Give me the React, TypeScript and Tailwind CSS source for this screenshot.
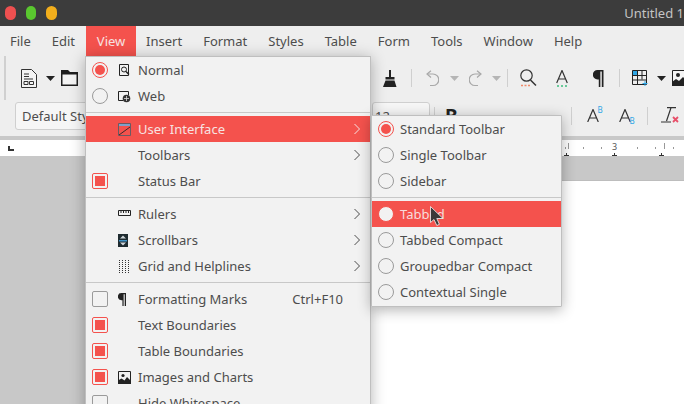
import React from "react";

const Dropdown = ({ dark = false }: { dark?: boolean }) => (
  <svg width="9" height="5" viewBox="0 0 9 5" className="shrink-0">
    <path d="M0 0h9L4.5 5z" fill={dark ? "#222" : "#b5b5b5"} />
  </svg>
);

const Sep = ({ className }: { className: string }) => (
  <div className={`h-[18px] w-px shrink-0 bg-[#cfcfcf] ${className}`} />
);

const Chevron = () => (
  <svg width="8" height="12" viewBox="0 0 8 12" className="absolute right-[9px]">
    <path d="M1.5 1l5 5-5 5" fill="none" stroke="currentColor" strokeWidth="1" />
  </svg>
);

const Radio = ({ on, hot }: { on?: boolean; hot?: boolean }) => (
  <div
    className={`flex h-4 w-4 shrink-0 items-center justify-center rounded-full border ${
      on ? "border-[#f4524d]" : hot ? "border-[#f4524d] bg-[#f2f2f2]" : "border-[#9a9a9a]"
    }`}
  >
    {on && <div className="h-[10px] w-[10px] rounded-full bg-[#f4524d]" />}
  </div>
);

const Check = ({ on }: { on?: boolean }) => (
  <div
    className={`flex h-4 w-4 shrink-0 items-center justify-center rounded-[2px] border ${
      on ? "border-[#f4524d]" : "border-[#9a9a9a]"
    }`}
  >
    {on && <div className="h-[10px] w-[10px] bg-[#f4524d]" />}
  </div>
);

const MenuSep = () => (
  <div className="flex h-[7px] items-start pt-[3px]">
    <div className="h-px w-full bg-[#c8c8c8]" />
  </div>
);

const Row = ({
  mark,
  icon,
  label,
  sub,
  hot,
  right,
}: {
  mark?: React.ReactNode;
  icon?: React.ReactNode;
  label: string;
  sub?: boolean;
  hot?: boolean;
  right?: string;
}) => (
  <div
    className={`relative flex h-[26px] items-center pl-[6px] ${
      hot ? "bg-[#f4524d] text-[#f7e3e2]" : "text-[#4d4d4d]"
    }`}
  >
    <div className="w-4 shrink-0">{mark}</div>
    <div className="ml-[10px] flex w-[20px] shrink-0 items-center">{icon}</div>
    <span>{label}</span>
    {right && <span className="absolute right-[27px]">{right}</span>}
    {sub && <Chevron />}
  </div>
);

const SubRow = ({ label, on, hot }: { label: string; on?: boolean; hot?: boolean }) => (
  <div
    className={`flex h-[26px] items-center gap-[6px] pl-[6px] ${
      hot ? "bg-[#f4524d] text-[#f7dcdb]" : "text-[#4d4d4d]"
    }`}
  >
    <Radio on={on} hot={hot} />
    <span>{label}</span>
  </div>
);

const IconNormal = () => (
  <svg width="13" height="14" viewBox="0 0 13 14" fill="none" stroke="#222">
    <path d="M1.5 1.5h9v11h-9z" />
    <circle cx="6" cy="6.5" r="2.5" />
    <path d="M8 8.5l3 3" strokeWidth="1.5" />
  </svg>
);

const IconWeb = () => (
  <svg width="13" height="13" viewBox="0 0 13 13" fill="none" stroke="#222">
    <path d="M5 10.5H.5v-9h10V5" />
    <circle cx="8.5" cy="8.5" r="3.8" fill="#333" stroke="none" />
    <path d="M6 8.5h5M8.5 6v5" stroke="#ddd" strokeWidth=".8" />
  </svg>
);

const IconUi = () => (
  <svg width="13" height="13" viewBox="0 0 13 13" fill="none">
    <path d="M.5 .5h12v12H.5z" stroke="#6b5a62" />
    <path d="M1 1h11v2H1z" fill="#7fa0c8" />
    <path d="M1 12L12 4" stroke="#3b2a2a" />
  </svg>
);

const IconRulers = () => (
  <svg width="13" height="8" viewBox="0 0 13 8" fill="none" stroke="#222">
    <path d="M.5 .5h12v5H.5z" />
    <path d="M3 1v2M5.5 1v2M8 1v2M10.5 1v2" />
  </svg>
);

const IconScroll = () => (
  <svg width="10" height="13" viewBox="0 0 10 13">
    <path d="M0 0h10v13H0z" fill="#1f2b30" />
    <path d="M5 1.5l3 3H2zM5 11.5l3-3H2z" fill="#cfd6da" />
    <path d="M1 6h8v1.5H1z" fill="#3f93c8" />
  </svg>
);

const IconGrid = () => (
  <svg width="13" height="13" viewBox="0 0 13 13" stroke="#333" strokeDasharray="1 1">
    <path d="M1.5 0v13M4.5 0v13M7.5 0v13M10.5 0v13" />
  </svg>
);

const IconPilcrow = ({ size = 13 }: { size?: number }) => (
  <svg width={size * 0.62} height={size} viewBox="0 0 8 13" fill="#222">
    <path d="M3.5 0H8v13H6.7V1.2H5.6V13H4.4V7.2h-1A3.6 3.6 0 0 1 3.5 0z" />
  </svg>
);

const IconImage = () => (
  <svg width="13" height="13" viewBox="0 0 13 13" fill="none">
    <path d="M.5 .5h12v12H.5z" stroke="#222" />
    <circle cx="5" cy="4.5" r="1.6" fill="#222" />
    <path d="M0 13V9.5l3.5-2 3 2 2.5-3.5 4 4V13z" fill="#222" />
  </svg>
);

const NewDoc = () => (
  <svg width="16" height="19" viewBox="0 0 16 19" fill="none" stroke="#333">
    <path d="M.5 .5h10l5 5v13H.5z" fill="#f4f4f4" />
    <path d="M3 5h5M3 7.5h5M3 10h9" />
    <path d="M3 12.5h4v3H3zM8.5 12.5h4v3h-4z" />
  </svg>
);

const Folder = () => (
  <svg width="17" height="16" viewBox="0 0 17 16">
    <path d="M0 0h7l2 2h8v14H0z" fill="#1f1f1f" />
    <path d="M1.5 4.5h14V14.500h-14z" fill="#f4f4f4" />
  </svg>
);

const Broom = () => (
  <svg width="14" height="17" viewBox="0 0 14 17" fill="#222">
    <path d="M6 0h2v7H6zM2.500 7h9v2.500h-9z" />
    <path d="M2.500 10.500h9L13.500 17H0z" />
  </svg>
);

const Undo = ({ flip }: { flip?: boolean }) => (
  <svg
    width="13"
    height="17"
    viewBox="0 0 13 17"
    fill="none"
    stroke="#a8a8a8"
    strokeWidth="1.200"
    className={flip ? "-scale-x-100" : ""}
  >
    <path d="M5 .7L1 4l4 3.500" />
    <path d="M1.500 4H7a5.500 5.500 0 0 1 0 11.500H4" />
  </svg>
);

const Find = () => (
  <svg width="17" height="18" viewBox="0 0 17 18" fill="none">
    <circle cx="6.500" cy="6.500" r="5.700" stroke="#333" strokeWidth="1.200" />
    <path d="M10.500 11l5.500 5.500" stroke="#333" strokeWidth="1.500" />
    <path d="M1 16.500h2M4.500 16.500h2M8 16.500h2" stroke="#f08a6a" strokeWidth="1.500" />
  </svg>
);

const LetterA = ({ dots }: { dots?: boolean }) => (
  <svg width="12" height="17" viewBox="0 0 12 17" fill="none">
    <path d="M.7 13L6 .5 11.300 13M2.500 9h7" stroke="#333" strokeWidth="1.200" />
    {dots && <path d="M1 16h2M5 16h2M9 16h2" stroke="#3fbf7f" strokeWidth="1.500" />}
  </svg>
);

const TableIcon = () => (
  <svg width="17" height="16" viewBox="0 0 17 16" fill="none">
    <path d="M.5 .5h5v5h-5z" fill="#2ea6e6" />
    <path d="M.5 .5h14v14H.5zM.5 5.500h14M.5 10h14M5.500 .5v14M10 .5v9" stroke="#222" />
    <path d="M13 11v5M10.500 13.500h5" stroke="#2ea6e6" />
  </svg>
);

const PicIcon = () => (
  <svg width="16" height="16" viewBox="0 0 16 16" fill="none" className="shrink-0">
    <path d="M.5 .5h15v15H.5z" stroke="#222" fill="#f4f4f4" />
    <circle cx="6" cy="5" r="2" fill="#222" />
    <path d="M0 16v-4l4-3 3 2 4-4 5 5v4z" fill="#222" />
  </svg>
);

const ScriptA = ({ mark, top }: { mark: string; top?: boolean }) => (
  <div className="relative h-[18px] w-[16px] shrink-0">
    <svg width="12" height="13" viewBox="0 0 12 13" fill="none" className="absolute left-0 top-[3px]">
      <path d="M.7 13L6 .5 11.300 13M2.500 9h7" stroke="#333" strokeWidth="1.200" />
    </svg>
    <span
      className={`absolute right-0 text-[8px] leading-[8px] text-[#2ea6e6] ${top ? "top-0" : "bottom-[-1px]"}`}
    >
      {mark}
    </span>
  </div>
);

const ClearFmt = () => (
  <svg width="18" height="16" viewBox="0 0 18 16" fill="none">
    <path d="M6 .7h9M10 .7L5.500 14M0 15h10" stroke="#333" strokeWidth="1.200" />
    <path d="M12 10l5 5M17 10l-5 5" stroke="#e8506a" strokeWidth="1.800" />
  </svg>
);

const Cursor = () => (
  <svg width="15" height="21" viewBox="0 0 15 21">
    <path d="M.5.500v16l3.500-3 2.800 6 2.600-1.200-2.600-5.800H13z" fill="#3a3a3a" stroke="#f2f2f2" strokeWidth=".8" />
  </svg>
);

const Ruler = () => {
  const ticks = [565, 583, 601, 637, 655, 673];
  return (
    <div className="relative mt-1 h-4 w-full bg-white">
      {ticks.map((x) => (
        <div key={x} className="absolute top-[7px] h-[2px] w-px bg-[#999]" style={{ left: x }} />
      ))}
      {[568, 664].map((x) => (
        <div key={x} className="absolute top-[3px] h-[6px] w-px bg-[#999]" style={{ left: x }} />
      ))}
      <span className="absolute left-[612px] top-[1px] text-[9px] leading-3 text-[#555]">3</span>
      {[564, 612, 659].map((x) => (
        <div key={x} className="absolute bottom-0 left-0 h-[3px] w-[5px]" style={{ left: x }}>
          <div className="mx-auto h-[3px] w-px bg-[#333]" />
          <div className="absolute bottom-0 h-px w-[5px] bg-[#333]" />
        </div>
      ))}
    </div>
  );
};

const App = () => {
  return (
    <div className="relative flex h-[404px] w-[684px] flex-col overflow-hidden bg-[#c8c8c8] font-['Noto_Sans',sans-serif] text-[13px] leading-[18px] text-[#4d4d4d]">
      {/* title bar */}
      <div className="flex h-[26px] shrink-0 items-center bg-[#3c3c3c] pl-[5px]">
        <div className="h-[14px] w-[14px] rounded-full bg-[#ee5050]" />
        <div className="ml-[10px] h-[14px] w-[14px] rounded-full bg-[#5ac72f]" />
        <div className="ml-[10px] h-[14px] w-[14px] rounded-full bg-[#f2ae1c]" />
        <span className="ml-[567px] whitespace-nowrap text-[#c4c4c4]">Untitled 1</span>
      </div>

      {/* menu bar */}
      <div className="flex h-[30px] shrink-0 items-center bg-[#eeeeee]">
        <span className="ml-[10px]">File</span>
        <span className="ml-[21px]">Edit</span>
        <span className="ml-[11px] flex h-[30px] w-[50px] items-center justify-center bg-[#f4524d] text-[#f7e3e2]">
          View
        </span>
        <span className="ml-[10px]">Insert</span>
        <span className="ml-[21px]">Format</span>
        <span className="ml-[21px]">Styles</span>
        <span className="ml-[21px]">Table</span>
        <span className="ml-[21px]">Form</span>
        <span className="ml-[21px]">Tools</span>
        <span className="ml-[21px]">Window</span>
        <span className="ml-[21px]">Help</span>
      </div>

      {/* toolbars */}
      <div className="flex h-[80px] shrink-0 flex-col bg-[#eeeeee]">
        <div className="flex h-[44px] items-center">
          <div className="ml-1 h-[44px] w-[2px] shrink-0 border-x border-[#d0d0d0]" />
          <div className="ml-[15px]"><NewDoc /></div>
          <div className="ml-[9px]"><Dropdown dark /></div>
          <div className="ml-[6px]"><Folder /></div>
          <Sep className="ml-[292px]" />
          <div className="ml-[12px]"><Broom /></div>
          <Sep className="ml-[14px]" />
          <div className="ml-[14px]"><Undo /></div>
          <div className="ml-[11px]"><Dropdown /></div>
          <div className="ml-[10px]"><Undo flip /></div>
          <div className="ml-[10px]"><Dropdown /></div>
          <Sep className="ml-[6px]" />
          <div className="ml-[12px]"><Find /></div>
          <div className="ml-[19px]"><LetterA dots /></div>
          <div className="ml-[25px]"><IconPilcrow size={17} /></div>
          <Sep className="ml-[15px]" />
          <div className="ml-[12px]"><TableIcon /></div>
          <div className="ml-[8px]"><Dropdown dark /></div>
          <div className="ml-[6px]"><PicIcon /></div>
        </div>
        <div className="flex h-[36px] items-start pt-[2px]">
          <div className="ml-[15px] flex h-[28px] w-[200px] shrink-0 items-center rounded-[3px] border border-[#cfcfcf] bg-[#f6f6f6] pl-[6px]">
            Default Style
          </div>
          <div className="ml-[157px] flex h-[28px] w-[58px] shrink-0 items-center rounded-[3px] border border-[#cfcfcf] bg-[#f6f6f6] pl-[2px]">
            12
          </div>
          <Sep className="ml-[4px] mt-[5px]" />
          <span className="ml-[10px] text-[19px] font-bold leading-[28px] text-[#222]">B</span>
          <Sep className="ml-[113px] mt-[5px]" />
          <div className="ml-[15px] mt-[4px]"><ScriptA mark="B" top /></div>
          <div className="ml-[16px] mt-[4px]"><ScriptA mark="B" /></div>
          <Sep className="ml-[12px] mt-[5px]" />
          <div className="ml-[13px] mt-[5px]"><ClearFmt /></div>
        </div>
      </div>

      {/* ruler and page */}
      <div className="relative shrink-0"><Ruler /></div>
      <div className="relative h-6 shrink-0 bg-[#c8c8c8]">
        <div className="absolute left-2 top-[-10px] h-[5px] w-[6px] border-b-2 border-l-2 border-[#333]" />
      </div>
      <div className="ml-[340px] flex-1 border-t border-[#bdbdbd] bg-white" />

      {/* View menu */}
      <div className="absolute left-[85px] top-[56px] h-[360px] w-[286px] border border-[#bfbfbf] bg-[#f2f2f2] shadow-[0_2px_14px_rgba(0,0,0,0.3)]">
        <Row mark={<Radio on />} icon={<IconNormal />} label="Normal" />
        <Row mark={<Radio />} icon={<IconWeb />} label="Web" />
        <MenuSep />
        <Row icon={<IconUi />} label="User Interface" sub hot />
        <Row label="Toolbars" sub />
        <Row mark={<Check on />} label="Status Bar" />
        <MenuSep />
        <Row icon={<IconRulers />} label="Rulers" sub />
        <Row icon={<IconScroll />} label="Scrollbars" sub />
        <Row icon={<IconGrid />} label="Grid and Helplines" sub />
        <MenuSep />
        <Row mark={<Check />} icon={<IconPilcrow />} label="Formatting Marks" right="Ctrl+F10" />
        <Row mark={<Check on />} label="Text Boundaries" />
        <Row mark={<Check on />} label="Table Boundaries" />
        <Row mark={<Check on />} icon={<IconImage />} label="Images and Charts" />
        <Row mark={<Check />} label="Hide Whitespace" />
      </div>

      {/* User Interface submenu */}
      <div className="absolute left-[371px] top-[115px] w-[191px] rounded-[1px] border border-[#bfbfbf] bg-[#f2f2f2] pb-px shadow-[0_3px_14px_rgba(0,0,0,0.3)]">
        <SubRow label="Standard Toolbar" on />
        <SubRow label="Single Toolbar" />
        <SubRow label="Sidebar" />
        <MenuSep />
        <SubRow label="Tabbed" hot />
        <SubRow label="Tabbed Compact" />
        <SubRow label="Groupedbar Compact" />
        <SubRow label="Contextual Single" />
      </div>

      {/* mouse pointer */}
      <div className="absolute left-[430px] top-[206px]">
        <Cursor />
      </div>
    </div>
  );
};

export default App;
